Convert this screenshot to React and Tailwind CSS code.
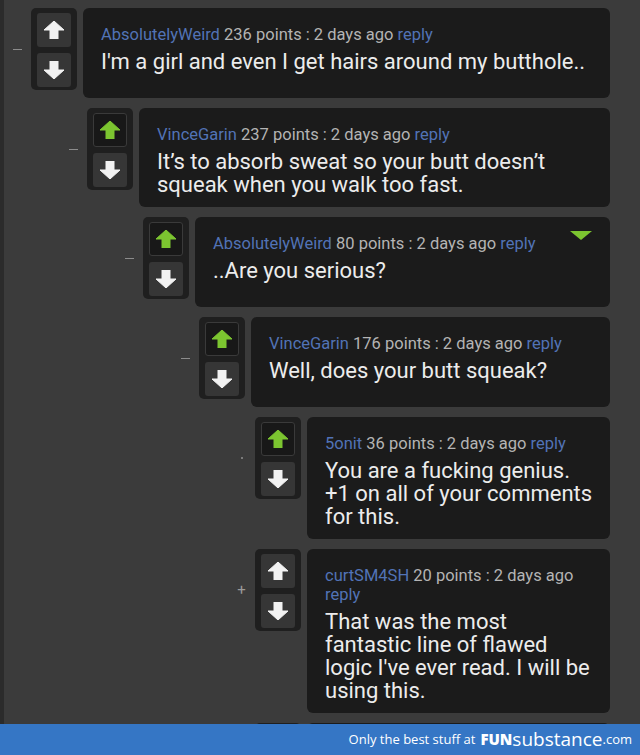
import React from "react";

const comments = [
  { depth: 0, user: "AbsolutelyWeird", points: 236, lines: ["I'm a girl and even I get hairs around my butthole.."], voted: false, marker: "dash" },
  { depth: 1, user: "VinceGarin", points: 237, lines: ["It’s to absorb sweat so your butt doesn’t squeak when you walk too fast."], voted: true, marker: "dash" },
  { depth: 2, user: "AbsolutelyWeird", points: 80, lines: ["..Are you serious?"], voted: true, marker: "dash", collapse: true },
  { depth: 3, user: "VinceGarin", points: 176, lines: ["Well, does your butt squeak?"], voted: true, marker: "dash" },
  { depth: 4, user: "5onit", points: 36, lines: ["You are a fucking genius.", "+1 on all of your comments for this."], voted: true, marker: "dot" },
  { depth: 4, user: "curtSM4SH", points: 20, lines: ["That was the most fantastic line of flawed logic I've ever read. I will be using this."], voted: false, marker: "plus" },
];

const indents = ["ml-0", "ml-[56px]", "ml-[112px]", "ml-[168px]", "ml-[224px]"];

function Arrow({ up, color }) {
  return (
    <svg width="20" height="18" viewBox="0 0 20 18" className={up ? "" : "rotate-180"}>
      <polygon points="10,0 20,9 14,9 14,18 6,18 6,9 0,9" fill={color} strokeLinejoin="round" stroke={color} strokeWidth="1" />
    </svg>
  );
}

function VoteBox({ voted }) {
  return (
    <div className="w-[46px] h-[82px] shrink-0 rounded-[5px] bg-[#1f1f1f] flex flex-col items-center pt-[5px] gap-[6px]">
      {voted ? (
        <div className="w-[34px] h-[34px] rounded-[3px] bg-[#181818] border border-[#3a3a3a] flex items-center justify-center">
          <Arrow up color="#7cc530" />
        </div>
      ) : (
        <div className="w-[34px] h-[34px] rounded-[3px] bg-[#363636] flex items-center justify-center">
          <Arrow up color="#f2f2f2" />
        </div>
      )}
      <div className="w-[34px] h-[34px] rounded-[3px] bg-[#363636] flex items-center justify-center">
        <Arrow color="#f2f2f2" />
      </div>
    </div>
  );
}

function Marker({ kind }) {
  return (
    <div className="w-[27px] h-[82px] shrink-0 flex items-center justify-center">
      {kind === "dash" && <div className="w-[9px] h-[1px] bg-[#8c8c8c]" />}
      {kind === "dot" && <div className="w-[2px] h-[2px] bg-[#7a7a7a]" />}
      {kind === "plus" && <span className="text-[15px] leading-none text-[#9a9a9a]">+</span>}
    </div>
  );
}

function Comment({ c }) {
  return (
    <div className={`flex items-start ${indents[c.depth]}`}>
      <Marker kind={c.marker} />
      <VoteBox voted={c.voted} />
      <div className="relative ml-[6px] flex-1 min-h-[90px] rounded-[6px] bg-[#1b1b1b] pl-[18px] pr-[12px] pt-[17px] pb-[11px]">
        <div className="text-[16.5px] leading-[19px] text-[#b4b4b4]">
          <span className="text-[#5273b6]">{c.user}</span> {c.points} points : 2 days ago{" "}
          <span className="text-[#5273b6]">reply</span>
        </div>
        <div className="mt-[6px] text-[22px] leading-[23px] text-[#ececec]">
          {c.lines.map((l, i) => (
            <div key={i}>{l}</div>
          ))}
        </div>
        {c.collapse && (
          <div className="absolute right-[18px] top-[14px] w-0 h-0 border-l-[11px] border-r-[11px] border-t-[9px] border-l-transparent border-r-transparent border-t-[#7cc530]" />
        )}
      </div>
    </div>
  );
}

// next comment, only its top edge peeks out above the footer
function Stub() {
  return (
    <div className="flex items-start ml-[224px]">
      <div className="w-[27px] shrink-0" />
      <div className="w-[46px] h-[82px] shrink-0 rounded-[5px] bg-[#1f1f1f]" />
      <div className="ml-[6px] flex-1 h-[90px] rounded-[6px] bg-[#1b1b1b]" />
    </div>
  );
}

export default function App() {
  return (
    <div
      className="w-[640px] h-[755px] bg-[#3b3b3b] flex flex-col overflow-hidden"
      style={{ fontFamily: "Roboto, 'Noto Sans', sans-serif" }}
    >
      <div className="flex-1 overflow-hidden border-l-[4px] border-[#2b2b2b] pr-[30px] pt-[8px] flex flex-col gap-[10px]">
        {comments.map((c, i) => (
          <Comment key={i} c={c} />
        ))}
        <Stub />
      </div>
      <div
        className="h-[31px] shrink-0 bg-[#3576c5] flex items-center justify-end pr-[8px] text-white"
        style={{ fontFamily: "'Open Sans', sans-serif" }}
      >
        <span className="text-[13px] leading-none">Only the best stuff at</span>
        <span className="ml-[5px] text-[15px] leading-none font-extrabold">FUN</span>
        <span className="text-[19px] leading-none">substance</span>
        <span className="text-[13px] leading-none">.com</span>
      </div>
    </div>
  );
}
